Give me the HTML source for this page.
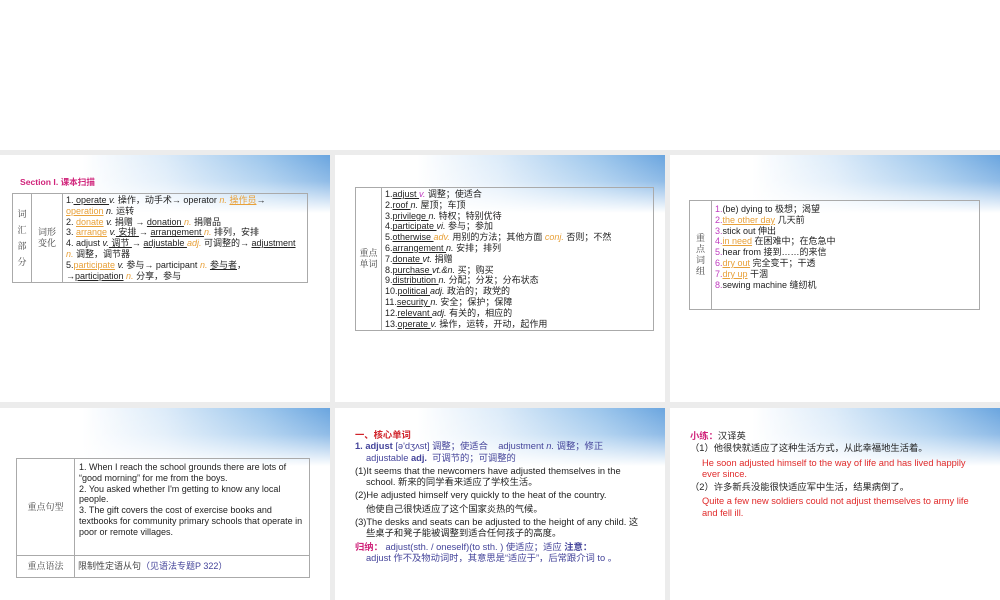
<!DOCTYPE html>
<html><head><meta charset="utf-8"><style>
*{margin:0;padding:0;box-sizing:border-box}
body{width:1000px;height:600px;background:#fff;position:relative;overflow:hidden;font-family:"Liberation Sans","Noto Sans CJK SC",sans-serif;font-size:9px;color:#222}
.gap{position:absolute;background:#ececec}
.s{position:absolute;background:#fff;overflow:hidden}
.hd{position:absolute;left:0;top:0;width:100%;height:58px;background:linear-gradient(to right,#fff 0%,#fff 25%,rgba(220,235,249,1) 50%,#9cc6ec 80%,#6aa5df 100%)}
.hd:after{content:"";position:absolute;left:0;top:0;width:100%;height:100%;background:linear-gradient(to bottom,rgba(255,255,255,0) 0%,rgba(255,255,255,0.25) 45%,#fff 100%)}
table{position:absolute;border-collapse:collapse}
td{border:1px solid #aaa;vertical-align:middle;padding:1px 3px;line-height:10.8px}
.c{text-align:center;color:#444;font-family:"Noto Serif CJK SC",serif}
u{text-decoration:underline}
.o{color:#e8a13a}
.m{color:#c03cc0}
.p{color:#d0237a}
.b{color:#44449a}
.r{color:#e02a2a}
.a{position:absolute;line-height:11.5px;font-size:9.3px}
</style></head><body>
<div class="gap" style="left:0;top:150px;width:1000px;height:5px"></div>
<div class="gap" style="left:330px;top:150px;width:5px;height:450px"></div>
<div class="gap" style="left:665px;top:150px;width:5px;height:450px"></div>
<div class="gap" style="left:0;top:402px;width:1000px;height:6px"></div>

<div class="s" style="left:0;top:155px;width:330px;height:247px"><div class="hd"></div>
<div class="a p" style="left:20px;top:22px;font-weight:bold;font-size:8.6px">Section I. 课本扫描</div>
<table style="left:12px;top:38px;width:296px">
<tr><td class="c" style="width:19px;line-height:16px">词<br>汇<br>部<br>分</td><td class="c" style="width:31px">词形<br>变化</td>
<td>1.<u> operate </u><i>v.</i> 操作，动手术→ operator <i class="o">n.</i> <u class="o">操作员</u>→<br><u class="o">operation</u> <i>n.</i> 运转<br>2. <u class="o">donate</u> <i>v.</i> 捐赠 → <u>donation </u><i class="o">n.</i> 捐赠品<br>3. <u class="o">arrange</u> <i>v.</i><u> 安排 </u>→ <u>arrangement </u><i class="o">n.</i> 排列，安排<br>4. adjust <i>v.</i><u> 调节 </u>→ <u>adjustable </u><i class="o">adj.</i> 可调整的→ <u>adjustment</u><br><i class="o">n.</i> 调整，调节器<br>5.<u class="o">participate</u> <i>v.</i> 参与→ participant <i class="o">n.</i> <u>参与者</u>，<br>→<u>participation</u> <i class="o">n.</i> 分享，参与</td></tr></table></div>

<div class="s" style="left:335px;top:155px;width:330px;height:247px"><div class="hd"></div>
<table style="left:20px;top:32px;width:299px">
<tr><td class="c" style="width:26px;padding:0 2px">重点<br>单词</td>
<td>1.<u>adjust </u> <i class="m">v.</i> 调整；使适合<br>2.<u>roof </u> <i>n.</i> 屋顶；车顶<br>3.<u>privilege </u> <i>n.</i> 特权；特别优待<br>4.<u>participate </u> <i>vi.</i> 参与；参加<br>5.<u>otherwise </u> <i class="o">adv.</i> 用别的方法；其他方面 <i class="o">conj.</i> 否则；不然<br>6.<u>arrangement </u> <i>n.</i> 安排；排列<br>7.<u>donate </u> <i>vt.</i> 捐赠<br>8.<u>purchase </u> <i>vt.&amp;n.</i> 买；购买<br>9.<u>distribution </u> <i>n.</i> 分配；分发；分布状态<br>10.<u>political </u> <i>adj.</i> 政治的；政党的<br>11.<u>security </u> <i>n.</i> 安全；保护；保障<br>12.<u>relevant </u> <i>adj.</i> 有关的，相应的<br>13.<u>operate </u> <i>v.</i> 操作，运转，开动，起作用</td></tr></table></div>

<div class="s" style="left:670px;top:155px;width:330px;height:247px"><div class="hd"></div>
<table style="left:19px;top:45px;width:291px;height:110px">
<tr><td class="c" style="width:22px">重<br>点<br>词<br>组</td>
<td style="vertical-align:top;padding-top:3px"><span class="m">1.</span>(be) dying to 极想；渴望<br><span class="m">2.</span><u class="o">the other day</u> 几天前<br><span class="m">3.</span>stick out 伸出<br><span class="m">4.</span><u class="o">in need</u> 在困难中；在危急中<br><span class="m">5.</span>hear from 接到……的来信<br><span class="m">6.</span><u class="o">dry out</u> 完全变干；干透<br><span class="m">7.</span><u class="o">dry up</u> 干涸<br><span class="m">8.</span>sewing machine 缝纫机</td></tr></table></div>

<div class="s" style="left:0;top:408px;width:330px;height:192px"><div class="hd"></div>
<table style="left:16px;top:50px;width:294px">
<tr><td class="c" style="width:58px;height:97px">重点句型</td><td style="vertical-align:top;padding:3px 4px 12px">1. When I reach the school grounds there are lots of “good morning” for me from the boys.<br>2. You asked whether I'm getting to know any local people.<br>3. The gift covers the cost of exercise books and textbooks for community primary schools that operate in poor or remote villages.</td></tr>
<tr><td class="c" style="height:22px">重点语法</td><td style="color:#444">限制性定语从句<span class="b">（见语法专题P 322）</span></td></tr></table></div>

<div class="s" style="left:335px;top:408px;width:330px;height:192px"><div class="hd"></div>
<div class="a" style="left:20px;top:22px;line-height:11.3px;width:285px">
<div class="r" style="font-weight:bold;color:#d0232a">一、核心单词</div>
<div><b class="b">1. adjust</b> <span class="b">[ə'dʒʌst] 调整；使适合 &nbsp;&nbsp; adjustment <i>n.</i> 调整；修正</span></div>
<div class="b" style="padding-left:11px">adjustable <b>adj.</b> &nbsp;可调节的；可调整的</div>
<div style="margin-top:2px">(1)It seems that the newcomers have adjusted themselves in the</div>
<div style="padding-left:11px">school. 新来的同学看来适应了学校生活。</div>
<div style="margin-top:2px">(2)He adjusted himself very quickly to the heat of the country.</div>
<div style="padding-left:11px;margin-top:2px">他使自己很快适应了这个国家炎热的气候。</div>
<div style="margin-top:2px">(3)The desks and seats can be adjusted to the height of any child. 这</div>
<div style="padding-left:11px">些桌子和凳子能被调整到适合任何孩子的高度。</div>
<div class="b" style="margin-top:2px"><b class="p">归纳：</b> adjust(sth. / oneself)(to sth. ) 使适应；适应 <b>注意：</b></div>
<div class="b" style="padding-left:11px">adjust 作不及物动词时，其意思是“适应于”，后常跟介词 to 。</div>
</div></div>

<div class="s" style="left:670px;top:408px;width:330px;height:192px"><div class="hd"></div>
<div class="a" style="left:20px;top:23px;line-height:11.3px;width:290px">
<div><b class="p">小练：</b>汉译英</div>
<div style="margin-top:1px">（1）他很快就适应了这种生活方式，从此幸福地生活着。</div>
<div class="r" style="padding-left:12px;margin-top:3px;width:282px">He soon adjusted himself to the way of life and has lived happily ever since.</div>
<div style="margin-top:2px">（2）许多新兵没能很快适应军中生活，结果病倒了。</div>
<div class="r" style="padding-left:12px;margin-top:3px;width:282px">Quite a few new soldiers could not adjust themselves to army life and fell ill.</div>
</div></div>
</body></html>
